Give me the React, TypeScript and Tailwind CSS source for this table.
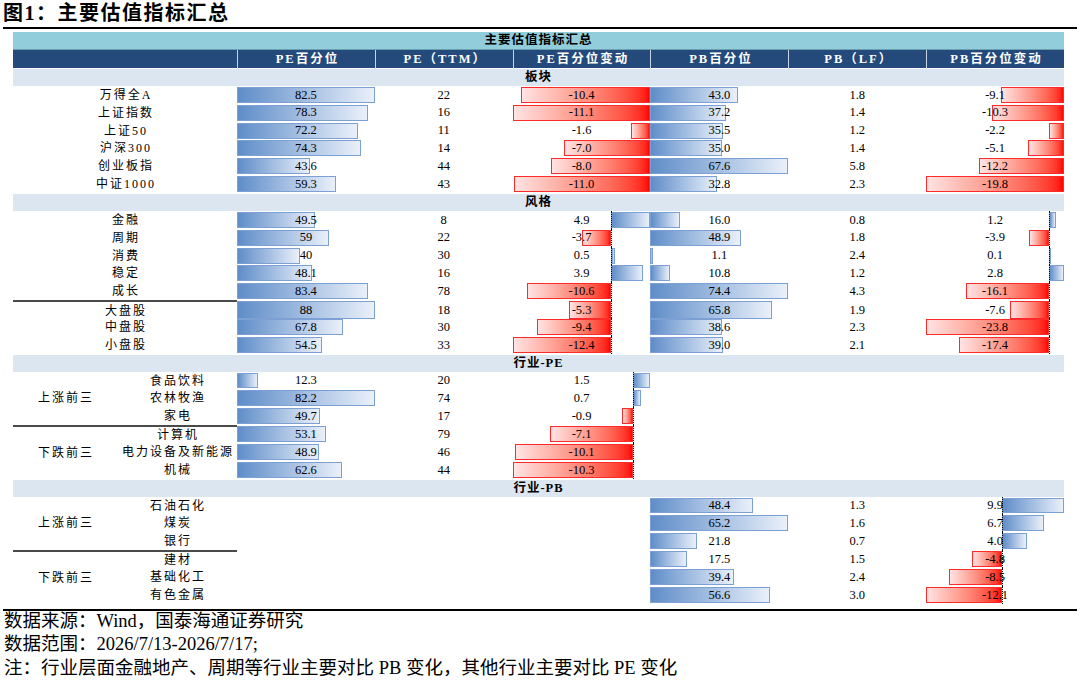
import React from 'react'

type Row = { name: string; v: string[] }
type Group = { label: string; rows: Row[] }

const COLS = ['PE百分位', 'PE（TTM）', 'PE百分位变动', 'PB百分位', 'PB（LF）', 'PB百分位变动']
const BAR_COLS = [0, 2, 3, 5]

const board: Row[] = [
  { name: '万得全A', v: ['82.5', '22', '-10.4', '43.0', '1.8', '-9.1'] },
  { name: '上证指数', v: ['78.3', '16', '-11.1', '37.2', '1.4', '-10.3'] },
  { name: '上证50', v: ['72.2', '11', '-1.6', '35.5', '1.2', '-2.2'] },
  { name: '沪深300', v: ['74.3', '14', '-7.0', '35.0', '1.4', '-5.1'] },
  { name: '创业板指', v: ['43.6', '44', '-8.0', '67.6', '5.8', '-12.2'] },
  { name: '中证1000', v: ['59.3', '43', '-11.0', '32.8', '2.3', '-19.8'] },
]

const style: Row[] = [
  { name: '金融', v: ['49.5', '8', '4.9', '16.0', '0.8', '1.2'] },
  { name: '周期', v: ['59', '22', '-3.7', '48.9', '1.8', '-3.9'] },
  { name: '消费', v: ['40', '30', '0.5', '1.1', '2.4', '0.1'] },
  { name: '稳定', v: ['48.1', '16', '3.9', '10.8', '1.2', '2.8'] },
  { name: '成长', v: ['83.4', '78', '-10.6', '74.4', '4.3', '-16.1'] },
  { name: '大盘股', v: ['88', '18', '-5.3', '65.8', '1.9', '-7.6'] },
  { name: '中盘股', v: ['67.8', '30', '-9.4', '38.6', '2.3', '-23.8'] },
  { name: '小盘股', v: ['54.5', '33', '-12.4', '39.0', '2.1', '-17.4'] },
]

const indPE: Group[] = [
  {
    label: '上涨前三',
    rows: [
      { name: '食品饮料', v: ['12.3', '20', '1.5', '', '', ''] },
      { name: '农林牧渔', v: ['82.2', '74', '0.7', '', '', ''] },
      { name: '家电', v: ['49.7', '17', '-0.9', '', '', ''] },
    ],
  },
  {
    label: '下跌前三',
    rows: [
      { name: '计算机', v: ['53.1', '79', '-7.1', '', '', ''] },
      { name: '电力设备及新能源', v: ['48.9', '46', '-10.1', '', '', ''] },
      { name: '机械', v: ['62.6', '44', '-10.3', '', '', ''] },
    ],
  },
]

const indPB: Group[] = [
  {
    label: '上涨前三',
    rows: [
      { name: '石油石化', v: ['', '', '', '48.4', '1.3', '9.9'] },
      { name: '煤炭', v: ['', '', '', '65.2', '1.6', '6.7'] },
      { name: '银行', v: ['', '', '', '21.8', '0.7', '4.0'] },
    ],
  },
  {
    label: '下跌前三',
    rows: [
      { name: '建材', v: ['', '', '', '17.5', '1.5', '-4.8'] },
      { name: '基础化工', v: ['', '', '', '39.4', '2.4', '-8.5'] },
      { name: '有色金属', v: ['', '', '', '56.6', '3.0', '-12.1'] },
    ],
  },
]

type Scale = { lo: number; hi: number }

function scales(rows: Row[]): Scale[] {
  return COLS.map((_, c) => {
    const nums = rows.map((r) => r.v[c]).filter((s) => s !== '').map(Number)
    return { lo: Math.min(0, ...nums), hi: Math.max(0, ...nums) }
  })
}

function Cell({ text, col, sc }: { text: string; col: number; sc: Scale }) {
  const isBar = BAR_COLS.includes(col) && text !== ''
  const range = sc.hi - sc.lo || 1
  const axis = (-sc.lo / range) * 100
  const val = Number(text)
  const w = (Math.abs(val) / range) * 100
  const left = val >= 0 ? axis : axis - w
  const mixed = sc.lo < 0 && sc.hi > 0

  return (
    <div className="relative flex h-full items-center justify-center text-[12.5px] leading-none">
      {isBar && (
        <div
          className={
            val >= 0
              ? 'absolute top-px bottom-px border border-[#7c9fd4] bg-gradient-to-r from-[#5f8dc8] to-[#eaf0f9]'
              : 'absolute top-px bottom-px border border-[#ff2b2b] bg-gradient-to-r from-[#ffe3e3] to-[#ff0000]'
          }
          style={{ left: `${left}%`, width: `${w}%` }}
        />
      )}
      {isBar && mixed && (
        <div className="absolute top-0 bottom-0 border-l border-dotted border-black" style={{ left: `${axis}%` }} />
      )}
      <span className="relative">{text}</span>
    </div>
  )
}

function Label({ children, sep }: { children: React.ReactNode; sep?: boolean }) {
  return (
    <div
      className={
        sep
          ? 'flex h-full items-center justify-center border-t-2 border-[#4a4a4a] pl-[2px] text-[12px] tracking-[2px]'
          : 'flex h-full items-center justify-center pl-[2px] text-[12px] tracking-[2px]'
      }
    >
      {children}
    </div>
  )
}

function Section({ title }: { title: string }) {
  return (
    <div className="flex h-[17.86px] items-center justify-center border-t border-white bg-[#dce6f1] text-[12.5px] font-bold tracking-[1px]">
      {title}
    </div>
  )
}

function SimpleRows({ rows, sepBefore }: { rows: Row[]; sepBefore?: string }) {
  const sc = scales(rows)
  return (
    <>
      {rows.map((r) => (
        <div key={r.name} className="grid h-[17.86px] grid-cols-[224px_repeat(6,minmax(0,1fr))]">
          <Label sep={r.name === sepBefore}>{r.name}</Label>
          {r.v.map((t, c) => (
            <Cell key={c} text={t} col={c} sc={sc[c]} />
          ))}
        </div>
      ))}
    </>
  )
}

function IndustryRows({ groups }: { groups: Group[] }) {
  const sc = scales(groups.flatMap((g) => g.rows))
  return (
    <>
      {groups.map((g, gi) => (
        <div key={g.label} className="grid grid-cols-[104px_120px_repeat(6,minmax(0,1fr))] grid-rows-[repeat(3,17.86px)]">
          <div
            className={
              gi > 0
                ? 'row-span-3 flex items-center justify-center border-t-2 border-[#4a4a4a] pl-[2px] text-[12px] tracking-[2px]'
                : 'row-span-3 flex items-center justify-center pl-[2px] text-[12px] tracking-[2px]'
            }
          >
            {g.label}
          </div>
          {g.rows.map((r, ri) => (
            <React.Fragment key={r.name}>
              <Label sep={gi > 0 && ri === 0}>{r.name}</Label>
              {r.v.map((t, c) => (
                <Cell key={c} text={t} col={c} sc={sc[c]} />
              ))}
            </React.Fragment>
          ))}
        </div>
      ))}
    </>
  )
}

export default function App() {
  return (
    <div className="h-[680px] w-[1080px] overflow-hidden bg-white font-['Liberation_Serif','Noto_Sans_CJK_SC',serif] text-black">
      <div className="h-[27px] pl-[3px] text-[20px] font-bold leading-[27px] tracking-[1.5px]">
        图1：主要估值指标汇总
      </div>
      <div className="mx-[3px] h-[2px] bg-black" />

      <div className="mt-[3px] ml-[13px] w-[1051px]">
        <div className="flex h-[18px] items-center justify-center border-b border-[#6a9fb0] bg-[#92cddc] text-[12.5px] font-bold tracking-[1px]">
          主要估值指标汇总
        </div>
        <div className="grid h-[18px] grid-cols-[224px_repeat(6,minmax(0,1fr))] bg-[#244a7c] text-[12.5px] font-bold tracking-[2px] text-white">
          <div />
          {COLS.map((c) => (
            <div key={c} className="flex items-center justify-center border-l border-[#c9d4e4] pl-[2px]">
              {c}
            </div>
          ))}
        </div>

        <Section title="板块" />
        <SimpleRows rows={board} />
        <Section title="风格" />
        <SimpleRows rows={style} sepBefore="大盘股" />
        <Section title="行业-PE" />
        <IndustryRows groups={indPE} />
        <Section title="行业-PB" />
        <IndustryRows groups={indPB} />
      </div>

      <div className="mx-[3px] mt-[5px] h-[2px] bg-black" />
      <div className="-mt-px pl-[4px] text-[18.5px] leading-[23.5px]">
        <p>数据来源：Wind，国泰海通证券研究</p>
        <p>数据范围：2026/7/13-2026/7/17;</p>
        <p>注：行业层面金融地产、周期等行业主要对比 PB 变化，其他行业主要对比 PE 变化</p>
      </div>
    </div>
  )
}
